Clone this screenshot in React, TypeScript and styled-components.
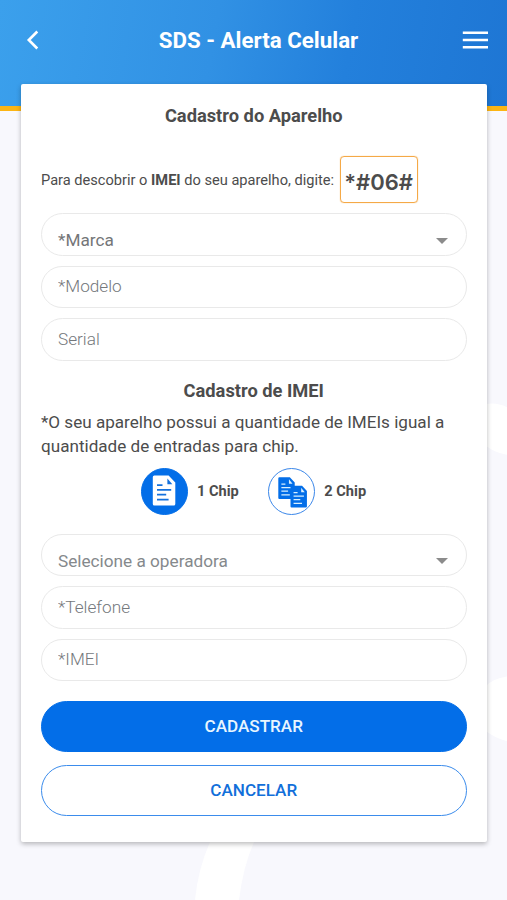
import React from "react";
import styled, { createGlobalStyle } from "styled-components";

const GlobalStyle = createGlobalStyle`
  * { box-sizing: border-box; }
  body { margin: 0; background: #f8f8fd; font-family: Roboto, sans-serif; color: #4c4c4c; }
  button, input { font-family: inherit; }
`;

const Screen = styled.div`
  position: relative;
  height: 900px;
  overflow: hidden;
`;

const Backdrop = styled.svg`
  position: absolute;
  inset: 0;
`;

const Header = styled.header`
  position: relative;
  height: 111px;
  padding: 0 19px 31px 24px;
  display: grid;
  grid-template-columns: 26px 1fr 26px;
  align-items: center;
  background: linear-gradient(100deg, #3ba0ec 0%, #3191e4 42%, #2380dc 68%, #1e76d4 100%);
  border-bottom: 5px solid #fcb514;
  color: #fff;
`;

const HeaderTitle = styled.h1`
  margin: 0;
  padding: 4px 0 0 5px;
  text-align: center;
  font-size: 22.3px;
  line-height: 26px;
  font-weight: 700;
`;

const IconButton = styled.button`
  display: flex;
  padding: 4px 0 0;
  border: 0;
  background: none;
  color: inherit;
`;

const Card = styled.main`
  position: relative;
  width: 466px;
  height: 758px;
  margin: -27px 0 0 21px;
  padding: 20px 20.5px 0 20px;
  background: #fff;
  border-radius: 2px;
  box-shadow: 0 2px 5px rgba(0, 0, 0, 0.27);
`;

const SectionTitle = styled.h2<{ $top?: number }>`
  margin: ${(p) => p.$top ?? 0}px 0 0;
  text-align: center;
  font-size: 18.3px;
  line-height: 24px;
  font-weight: 700;
`;

const ImeiHint = styled.div`
  display: flex;
  align-items: center;
  height: 47px;
  margin: 28px 0 10px;
  font-size: 14.62px;
  white-space: nowrap;
`;

const DialCode = styled.span`
  width: 78px;
  height: 47px;
  margin-left: 5.5px;
  padding-top: 4px;
  display: flex;
  align-items: center;
  justify-content: center;
  border: 1.5px solid #f5a947;
  box-shadow: 0 0 1px #f5a947;
  border-radius: 4px;
  font-family: Inter, sans-serif;
  font-size: 22px;
  font-weight: 600;
`;

const Fields = styled.div`
  display: flex;
  flex-direction: column;
  gap: 10px;
`;

const pill = `
  width: 100%;
  height: 42.5px;
  border: 1.5px solid #e9e9e9;
  border-radius: 22px;
  background: #fff;
  font-size: 17.2px;
`;

const Input = styled.input`
  ${pill}
  padding: 0 16px 1px;
  outline: 0;
  font-weight: 300;
  &::placeholder { color: #74787c; opacity: 1; }
`;

const Select = styled.div<{ $color: string }>`
  ${pill}
  display: flex;
  align-items: center;
  justify-content: space-between;
  padding: 12px 17.5px 0 16px;
  color: ${(p) => p.$color};
`;

const Caret = styled.span`
  margin-top: 1px;
  border: 6px solid transparent;
  border-top-color: #8b8b8b;
  border-bottom: 0;
`;

const Note = styled.p`
  margin: 8px 0 9.5px;
  font-size: 17.1px;
  line-height: 23.5px;
  white-space: nowrap;
`;

const ChipOptions = styled.div`
  display: flex;
  gap: 29px;
  height: 47px;
  margin: 0 0 19px 99.5px;
`;

const ChipOption = styled.div`
  display: flex;
  align-items: center;
  gap: 9.5px;
  font-size: 14.6px;
  font-weight: 700;
`;

const ChipLabel = styled.span`
  padding-bottom: 0;
`;

const ChipCircle = styled.span<{ $selected?: boolean }>`
  width: 47px;
  height: 47px;
  display: flex;
  border-radius: 50%;
  border: 1.5px solid ${(p) => (p.$selected ? "#036ee8" : "#3b87e9")};
  background: ${(p) => (p.$selected ? "#036ee8" : "#fff")};
  svg { margin: -1px; flex: none; }
`;

const Actions = styled.div`
  display: flex;
  flex-direction: column;
  gap: 13px;
  margin-top: 19.5px;
`;

const Button = styled.button<{ $primary?: boolean }>`
  width: 100%;
  height: 51px;
  border: 1.5px solid ${(p) => (p.$primary ? "#036ee8" : "#3b8cec")};
  border-radius: 26px;
  background: ${(p) => (p.$primary ? "#036ee8" : "#fff")};
  color: ${(p) => (p.$primary ? "#e8f6ff" : "#126fda")};
  padding: 0 0 1px;
  font-size: 17.1px;
  font-weight: 500;
`;

const Sheet = ({ paper, ink }: { paper: string; ink: string }) => (
  <>
    <path d="M1.5 0H15.8L22.5 7V28.3a1.5 1.5 0 0 1-1.5 1.5H1.5A1.5 1.5 0 0 1 0 28.3V1.5A1.5 1.5 0 0 1 1.5 0Z" fill={paper} />
    <path d="M14.6 2.8V8.7H19.5Z" fill={ink} />
    <path d="M4.2 9.5h5.5M4.2 14.3h14.2M4.2 19.1h9.2M4.2 24h11.6" stroke={ink} strokeWidth="1.7" />
  </>
);

export default function App() {
  return (
    <Screen>
      <GlobalStyle />
      <Backdrop width="507" height="900" fill="none">
        <path d="M210 842H254Q243 867 239 900H195Q198 869 210 842Z" fill="#fff" />
        <path d="M486 404Q499 402 510 409V455Q497 454 486 446ZM486 686Q493 678 510 676V742Q496 739 486 731Z" fill="#fff" />
      </Backdrop>
      <Header>
        <IconButton aria-label="Voltar">
          <svg width="16" height="20" viewBox="0 0 16 20" fill="none" stroke="#fff" strokeWidth="2.6">
            <path d="M13.3 1.5 4.8 10l8.5 8.5" />
          </svg>
        </IconButton>
        <HeaderTitle>SDS - Alerta Celular</HeaderTitle>
        <IconButton aria-label="Menu">
          <svg width="26" height="20" viewBox="0 0 26 20" stroke="#fff" strokeWidth="2.5">
            <path d="M.8 2.7H26M.8 10H26M.8 17.3H26" />
          </svg>
        </IconButton>
      </Header>
      <Card>
        <SectionTitle>Cadastro do Aparelho</SectionTitle>
        <ImeiHint>
          <span>Para descobrir o <b>IMEI</b> do seu aparelho, digite:</span>
          <DialCode>*#06#</DialCode>
        </ImeiHint>
        <Fields>
          <Select $color="#747678">*Marca<Caret /></Select>
          <Input placeholder="*Modelo" />
          <Input placeholder="Serial" />
        </Fields>
        <SectionTitle $top={18.5}>Cadastro de IMEI</SectionTitle>
        <Note>
          *O seu aparelho possui a quantidade de IMEIs igual a
          <br />
          quantidade de entradas para chip.
        </Note>
        <ChipOptions>
          <ChipOption>
            <ChipCircle $selected>
              <svg width="47" height="47" viewBox="0 0 47 47">
                <g transform="translate(11.8 7.6)"><Sheet paper="#fff" ink="#1471dd" /></g>
              </svg>
            </ChipCircle>
            <ChipLabel>1 Chip</ChipLabel>
          </ChipOption>
          <ChipOption>
            <ChipCircle>
              <svg width="47" height="47" viewBox="0 0 47 47">
                <g transform="translate(10.3 9.3) scale(.73)"><Sheet paper="#036ee8" ink="#d8efff" /></g>
                <g transform="translate(22.5 17.8) scale(.73)"><Sheet paper="#036ee8" ink="#d8efff" /></g>
              </svg>
            </ChipCircle>
            <ChipLabel>2 Chip</ChipLabel>
          </ChipOption>
        </ChipOptions>
        <Fields>
          <Select $color="#85898c">Selecione a operadora<Caret /></Select>
          <Input placeholder="*Telefone" />
          <Input placeholder="*IMEI" />
        </Fields>
        <Actions>
          <Button $primary>CADASTRAR</Button>
          <Button>CANCELAR</Button>
        </Actions>
      </Card>
    </Screen>
  );
}
